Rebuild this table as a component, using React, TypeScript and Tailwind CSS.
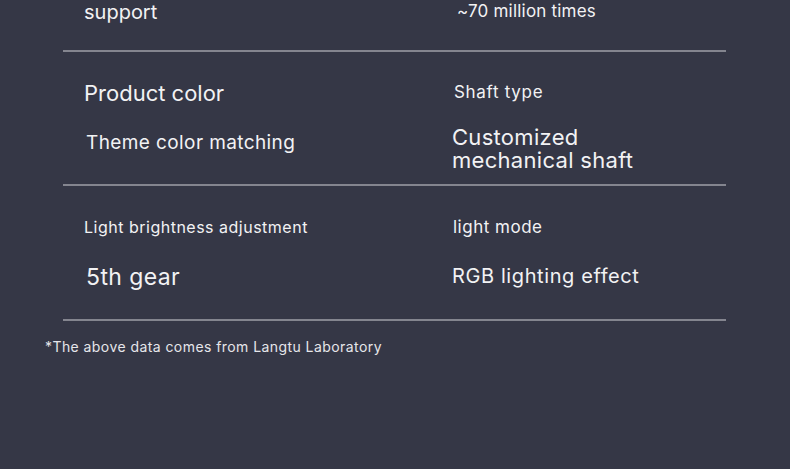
import React from 'react'

const Line: React.FC<{ className: string; children: React.ReactNode }> = ({ className, children }) => (
  <p className={`whitespace-nowrap text-[#f2f2f4] ${className}`}>{children}</p>
)

export default function App() {
  return (
    <div className="h-[469px] w-[790px] overflow-hidden bg-[#353746] font-['Inter','Noto_Sans',sans-serif]">
      <div className="ml-[63px] w-[663px]">
        {/* top row, cut off */}
        <div className="grid h-[52px] grid-cols-[368px_1fr] border-b-2 border-[#84858f] pl-[21px]">
          <div>
            <Line className="text-[20px] leading-[24px]">support</Line>
          </div>
          <div className="pl-[5px]">
            <Line className="text-[17px] leading-[22px] tracking-[0.2px]">~70 million times</Line>
          </div>
        </div>

        {/* colour / shaft */}
        <div className="grid h-[134px] grid-cols-[368px_1fr] border-b-2 border-[#84858f] pl-[21px]">
          <div>
            <Line className="mt-[27px] text-[22px] leading-[28px]">Product color</Line>
            <Line className="mt-[24px] pl-[2px] text-[19px] leading-[24px] tracking-[0.4px]">Theme color matching</Line>
          </div>
          <div>
            <Line className="mt-[29px] pl-[2px] text-[17px] leading-[22px] tracking-[0.7px]">Shaft type</Line>
            <Line className="mt-[23px] text-[22px] leading-[23px] tracking-[0.3px]">
              Customized
              <br />
              mechanical shaft
            </Line>
          </div>
        </div>

        {/* lighting */}
        <div className="grid h-[135px] grid-cols-[368px_1fr] border-b-2 border-[#84858f] pl-[21px]">
          <div>
            <Line className="mt-[31px] text-[16px] leading-[20px] tracking-[0.5px]">Light brightness adjustment</Line>
            <Line className="mt-[26px] pl-[2px] text-[23px] leading-[28px] tracking-[0.4px]">5th gear</Line>
          </div>
          <div>
            <Line className="mt-[30px] pl-[1px] text-[17px] leading-[22px] tracking-[0.5px]">light mode</Line>
            <Line className="mt-[25px] text-[20px] leading-[26px] tracking-[0.6px]">RGB lighting effect</Line>
          </div>
        </div>
      </div>

      <p className="ml-[45px] mt-[16px] text-[14px] leading-[20px] tracking-[0.43px] text-[#e6e6ea]">
        *The above data comes from Langtu Laboratory
      </p>
    </div>
  )
}
